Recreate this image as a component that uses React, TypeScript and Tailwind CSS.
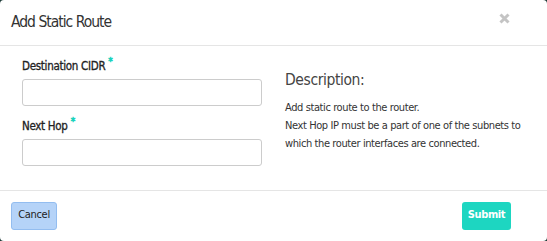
const font = { fontFamily: '"DejaVu Sans Condensed", "Liberation Sans Narrow", Roboto, sans-serif' };

function Field({ label }: { label: string }) {
  return (
    <div>
      <label className="flex items-start text-[11.5px] font-normal leading-[14px] tracking-[-0.3px] text-[#222] [-webkit-text-stroke:0.3px_#222]">
        {label}
        <span className="ml-[3px] -mt-[4px] text-[10px] text-[#1bd3bd] [-webkit-text-stroke:0.6px_#1bd3bd]">*</span>
      </label>
      <input
        type="text"
        className="mt-[6px] block h-[27px] w-[240px] rounded-[3px] border border-[#ccc] bg-white px-2 text-[12px] outline-none"
      />
    </div>
  );
}

export default function App() {
  return (
    <div className="h-[241px] w-[547px] bg-[#1c3a36]" style={font}>
      <div className="flex h-full w-full flex-col overflow-hidden rounded-[4px] bg-white">
        <div className="flex h-[46px] shrink-0 items-center justify-between border-b border-[#e5e5e5] pl-[11px] pr-[37px]">
          <h1 className="text-[15.5px] font-normal tracking-[-1px] text-[#333]">Add Static Route</h1>
          <svg width="11" height="11" viewBox="0 0 11 11" className="-mt-[8px]">
            <path d="M1.5 1.5 L9.5 9.5 M9.5 1.5 L1.5 9.5" stroke="#c4c4c4" strokeWidth="3" strokeLinecap="butt" />
          </svg>
        </div>

        <div className="flex flex-1 gap-[23px] border-b border-[#e5e5e5] pl-[22px] pt-[13px]">
          <div className="flex flex-col gap-[13px]">
            <Field label="Destination CIDR" />
            <Field label="Next Hop" />
          </div>
          <div className="pt-[11px]">
            <h2 className="text-[15.5px] leading-[20px] tracking-[-0.4px] text-[#444]">Description:</h2>
            <div className="mt-[9px] text-[11px] leading-[18px] tracking-[-0.4px] text-[#333]">
              <p>Add static route to the router.</p>
              <p>Next Hop IP must be a part of one of the subnets to which the router interfaces are connected.</p>
            </div>
          </div>
        </div>

        <div className="flex h-[50px] shrink-0 items-center justify-between px-[11px] pb-[1px]">
          <button className="h-[28px] w-[46px] rounded-[3px] border border-[#93bdf0] bg-[#b5d3f8] text-[11px] tracking-[-0.3px] text-[#222]">
            Cancel
          </button>
          <button className="mr-[25px] h-[28px] w-[49px] rounded-[3px] bg-[#1dd6c1] text-[11px] font-semibold tracking-[-0.4px] text-white">
            Submit
          </button>
        </div>
      </div>
    </div>
  );
}
